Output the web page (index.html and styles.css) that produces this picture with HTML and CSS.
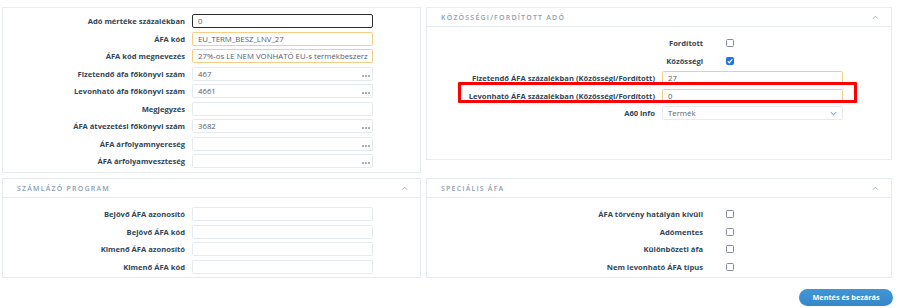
FILE: index.html
```html
<!DOCTYPE html>
<html lang="hu">
<head>
<meta charset="utf-8">
<title>ÁFA kód</title>
<link rel="stylesheet" href="styles.css">
</head>
<body>
<div class="layout">
  <section class="panel panel-main">
    <div class="body body-main">
      <div class="row"><div class="lbl">Adó mértéke százalékban</div><div class="field focus"><span class="val">0</span></div></div>
      <div class="row"><div class="lbl">ÁFA kód</div><div class="field req"><span class="val">EU_TERM_BESZ_LNV_27</span></div></div>
      <div class="row"><div class="lbl">ÁFA kód megnevezés</div><div class="field req"><span class="val">27%-os LE NEM VONHATÓ EU-s termékbeszerz</span></div></div>
      <div class="row"><div class="lbl">Fizetendő áfa főkönyvi szám</div><div class="field"><span class="val">467</span><span class="dots"><i></i><i></i><i></i></span></div></div>
      <div class="row"><div class="lbl">Levonható áfa főkönyvi szám</div><div class="field"><span class="val">4661</span><span class="dots"><i></i><i></i><i></i></span></div></div>
      <div class="row"><div class="lbl">Megjegyzés</div><div class="field"><span class="val"></span></div></div>
      <div class="row"><div class="lbl">ÁFA átvezetési főkönyvi szám</div><div class="field"><span class="val">3682</span><span class="dots"><i></i><i></i><i></i></span></div></div>
      <div class="row"><div class="lbl">ÁFA árfolyamnyereség</div><div class="field"><span class="val"></span><span class="dots"><i></i><i></i><i></i></span></div></div>
      <div class="row"><div class="lbl">ÁFA árfolyamveszteség</div><div class="field"><span class="val"></span><span class="dots"><i></i><i></i><i></i></span></div></div>
    </div>
  </section>

  <section class="panel panel-reverse">
    <header class="head"><span class="title">Közösségi/fordított adó</span><svg class="chev" viewBox="0 0 8 5" width="7" height="5"><polyline points="1,4 4,1 7,4" fill="none" stroke="#aab6c4" stroke-width="1.1"/></svg></header>
    <div class="body body-reverse">
      <div class="crow"><div class="lbl">Fordított</div><span class="cb"></span></div>
      <div class="crow"><div class="lbl">Közösségi</div><span class="cb on"><svg viewBox="0 0 8 8" width="8" height="8"><polyline points="1.8,4.2 3.4,5.8 6.3,2.2" fill="none" stroke="#fff" stroke-width="1.3"/></svg></span></div>
      <div class="irow"><div class="lbl">Fizetendő ÁFA százalékban (Közösségi/Fordított)</div><div class="field req"><span class="val">27</span></div></div>
      <div class="irow"><div class="lbl">Levonható ÁFA százalékban (Közösségi/Fordított)</div><div class="field req"><span class="val">0</span></div></div>
      <div class="irow"><div class="lbl">A60 info</div><div class="field select"><span class="val">Termék</span><svg class="sel-chev" viewBox="0 0 8 5" width="7" height="5"><polyline points="1,1 4,4 7,1" fill="none" stroke="#7fb2da" stroke-width="1.2"/></svg></div></div>
      <div class="highlight"></div>
    </div>
  </section>

  <section class="panel">
    <header class="head"><span class="title">Számlázó program</span><svg class="chev" viewBox="0 0 8 5" width="7" height="5"><polyline points="1,4 4,1 7,4" fill="none" stroke="#aab6c4" stroke-width="1.1"/></svg></header>
    <div class="body body-sub">
      <div class="row"><div class="lbl">Bejövő ÁFA azonosító</div><div class="field"><span class="val"></span></div></div>
      <div class="row"><div class="lbl">Bejövő ÁFA kód</div><div class="field"><span class="val"></span></div></div>
      <div class="row"><div class="lbl">Kimenő ÁFA azonosító</div><div class="field"><span class="val"></span></div></div>
      <div class="row"><div class="lbl">Kimenő ÁFA kód</div><div class="field"><span class="val"></span></div></div>
    </div>
  </section>

  <section class="panel">
    <header class="head"><span class="title">Speciális ÁFA</span><svg class="chev" viewBox="0 0 8 5" width="7" height="5"><polyline points="1,4 4,1 7,4" fill="none" stroke="#aab6c4" stroke-width="1.1"/></svg></header>
    <div class="body body-sub">
      <div class="crow"><div class="lbl">ÁFA törvény hatályán kívüli</div><span class="cb"></span></div>
      <div class="crow"><div class="lbl">Adómentes</div><span class="cb"></span></div>
      <div class="crow"><div class="lbl">Különbözeti áfa</div><span class="cb"></span></div>
      <div class="crow"><div class="lbl">Nem levonható ÁFA típus</div><span class="cb"></span></div>
    </div>
  </section>
</div>
<div class="footer">
  <button class="btn" type="button">Mentés és bezárás</button>
</div>
</body>
</html>
```

FILE: styles.css
```css
* { box-sizing: border-box; }

html, body { background: #ffffff; }

body {
  margin: 0;
  padding: 7px 8px 0 2px;
  font-family: "Open Sans", "Noto Sans", "DejaVu Sans", sans-serif;
  color: #2f4457;
}

.layout {
  display: grid;
  grid-template-columns: 419px 466px;
  column-gap: 5px;
  row-gap: 5px;
  align-items: start;
}

.panel {
  position: relative;
  border: 1px solid #e6ebef;
  background: #fff;
}

.head {
  height: 19px;
  border-bottom: 1px solid #e6ebef;
  display: flex;
  align-items: center;
  justify-content: space-between;
  padding: 0 12px 0 14px;
}

.title {
  font-size: 7px;
  font-weight: 600;
  letter-spacing: 1.2px;
  text-transform: uppercase;
  color: #8d9db3;
}

.chev { display: block; }

.body {
  position: relative;
  display: flex;
  flex-direction: column;
  gap: 3.5px;
}

.body-main { padding: 6px 0 4px 0; }
.body-reverse { padding: 9px 0 39px 0; }
.body-sub { padding: 9px 0 3px 0; }

.row {
  display: grid;
  grid-template-columns: 182px 181px;
  column-gap: 7px;
  align-items: center;
  height: 14px;
}

.irow {
  display: grid;
  grid-template-columns: 228px 181px;
  column-gap: 7px;
  align-items: center;
  height: 14px;
}

.crow {
  display: grid;
  grid-template-columns: 276px 8px;
  column-gap: 23px;
  align-items: center;
  height: 14px;
}

.lbl {
  text-align: right;
  font-size: 7.6px;
  font-weight: 700;
  color: #2f4659;
  white-space: nowrap;
  line-height: 14px;
}

.field {
  position: relative;
  height: 14px;
  border: 1px solid #e5eaee;
  border-radius: 1.5px;
  display: flex;
  align-items: center;
  padding: 0 2px 0 5px;
  overflow: hidden;
}

.field.req { border-color: #f6cd86; }

.field.focus {
  border: 1.4px solid #2c2c2c;
  border-radius: 2px;
}

.val {
  font-size: 7.8px;
  color: #55606b;
  white-space: nowrap;
  line-height: 12px;
}

.dots {
  position: absolute;
  right: 2px;
  bottom: 3px;
  display: flex;
  gap: 1.2px;
}

.dots i {
  display: block;
  width: 1.8px;
  height: 1.8px;
  border-radius: 0.5px;
  background: #a1adbb;
}

.select { justify-content: space-between; padding-right: 5px; }
.sel-chev { display: block; }

.cb {
  display: block;
  width: 8px;
  height: 8px;
  border: 1px solid #858c95;
  border-radius: 1.5px;
  background: #fff;
}

.cb.on {
  background: #1b74e4;
  border-color: #1b74e4;
  position: relative;
}

.cb.on svg {
  position: absolute;
  left: -1px;
  top: -1px;
}

.highlight {
  position: absolute;
  left: 31px;
  top: 55px;
  width: 399px;
  height: 21px;
  border: 3px solid #ff0000;
  border-radius: 1px;
  pointer-events: none;
}

.footer {
  display: flex;
  justify-content: flex-end;
  margin-top: 11px;
  margin-right: -1px;
}

.btn {
  width: 94px;
  height: 17px;
  border: 0;
  border-radius: 9px;
  background: linear-gradient(#4196d6, #3687c9);
  color: #fff;
  font-family: "Open Sans", "Noto Sans", sans-serif;
  font-size: 7.3px;
  font-weight: 700;
  padding: 0;
}
```
